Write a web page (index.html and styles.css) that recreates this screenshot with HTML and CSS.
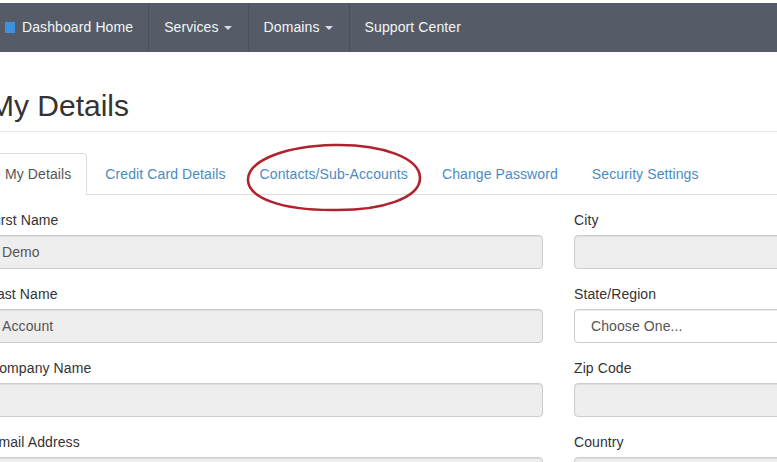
FILE: index.html
```html
<!DOCTYPE html>
<html lang="en">
<head>
<meta charset="utf-8">
<title>My Details</title>
<link rel="stylesheet" href="styles.css">
</head>
<body>
<nav class="navbar">
  <a class="nav-item nav-home" href="#"><span class="home-icon"></span>Dashboard Home</a>
  <a class="nav-item" href="#">Services<span class="caret"></span></a>
  <a class="nav-item" href="#">Domains<span class="caret"></span></a>
  <a class="nav-item nav-last" href="#">Support Center</a>
</nav>
<main class="page">
  <h1 class="page-title">My Details</h1>
  <div class="tabs-wrap">
    <ul class="tabs">
      <li class="tab active"><a href="#">My Details</a></li>
      <li class="tab"><a href="#">Credit Card Details</a></li>
      <li class="tab"><a href="#">Contacts/Sub-Accounts</a></li>
      <li class="tab"><a href="#">Change Password</a></li>
      <li class="tab"><a href="#">Security Settings</a></li>
    </ul>
    <svg class="circle-mark" width="184" height="72" viewBox="0 0 184 72">
      <path d="M92 3 C140 2 178 16 178 36 C178 56 140 69 90 68 C40 68 5 56 6 37 C7 18 44 4 92 3 Z" fill="none" stroke="#b1222e" stroke-width="2.6"/>
    </svg>
  </div>
  <form class="form-grid">
    <div class="col">
      <div class="form-group"><label class="lbl">First Name</label><input class="field" type="text" value="Demo" readonly></div>
      <div class="form-group"><label class="lbl">Last Name</label><input class="field" type="text" value="Account" readonly></div>
      <div class="form-group"><label class="lbl">Company Name</label><input class="field" type="text" value="" readonly></div>
      <div class="form-group"><label class="lbl">Email Address</label><input class="field" type="text" value="" readonly></div>
    </div>
    <div class="col">
      <div class="form-group"><label class="lbl">City</label><input class="field" type="text" value="" readonly></div>
      <div class="form-group"><label class="lbl">State/Region</label><div class="field select">Choose One...</div></div>
      <div class="form-group"><label class="lbl">Zip Code</label><input class="field" type="text" value="" readonly></div>
      <div class="form-group"><label class="lbl">Country</label><input class="field" type="text" value="" readonly></div>
    </div>
  </form>
</main>
</body>
</html>
```
FILE: styles.css
```css
html, body {
  margin: 0;
  padding: 0;
  overflow: hidden;
  background: #ffffff;
}
body {
  padding-top: 3px;
  font-family: "Liberation Sans", Arial, sans-serif;
  font-size: 14px;
  letter-spacing: 0.1px;
  color: #333333;
}
.navbar {
  display: flex;
  height: 49px;
  background: #555c67;
  align-items: stretch;
}
.nav-item {
  display: flex;
  align-items: center;
  padding: 0 16px 0 15px;
  color: #f4f5f6;
  text-decoration: none;
  font-size: 14px;
  border-right: 1px solid #4a5059;
  padding-bottom: 1px;
}
.nav-home {
  padding-left: 5px;
  padding-right: 15px;
}
.nav-last {
  border-right: none;
}
.home-icon {
  width: 10px;
  height: 11px;
  background: #3d92e0;
  margin-right: 7px;
}
.caret {
  display: inline-block;
  width: 0;
  height: 0;
  margin-left: 5px;
  margin-top: 2px;
  border-top: 4px solid #d9dce0;
  border-left: 4px solid transparent;
  border-right: 4px solid transparent;
}
.page {
  margin-left: -11px;
  width: 1139px;
}
.page-title {
  margin: 37px 0 0 0;
  padding-bottom: 9px;
  font-size: 30px;
  line-height: 33px;
  letter-spacing: 0;
  font-weight: normal;
  color: #333333;
  border-bottom: 1px solid #e6e6e6;
}
.tabs-wrap {
  position: relative;
  margin-top: 21px;
}
.tabs {
  display: flex;
  list-style: none;
  margin: 0;
  padding: 0;
  border-bottom: 1px solid #dddddd;
}
.tab {
  margin-bottom: -1px;
  margin-right: 2px;
}
.tab a {
  display: block;
  padding: 10px 15px;
  line-height: 20px;
  border: 1px solid transparent;
  border-radius: 4px 4px 0 0;
  color: #4b8bc2;
  text-decoration: none;
}
.tab.active a {
  color: #555555;
  background: #ffffff;
  border-color: #dddddd;
  border-bottom-color: transparent;
}
.circle-mark {
  position: absolute;
  left: 253px;
  top: -11px;
}
.form-grid {
  display: grid;
  grid-template-columns: 554px 554px;
  column-gap: 31px;
  padding-top: 15px;
}
.form-group {
  margin-bottom: 15px;
}
.lbl {
  display: block;
  line-height: 20px;
  margin-bottom: 5px;
  color: #333333;
}
.field {
  display: block;
  box-sizing: border-box;
  width: 100%;
  height: 34px;
  margin: 0;
  padding: 6px 12px;
  font-family: "Liberation Sans", Arial, sans-serif;
  font-size: 14px;
  letter-spacing: 0.1px;
  line-height: 20px;
  color: #555555;
  background: #eeeeee;
  border: 1px solid #cccccc;
  border-radius: 4px;
  box-shadow: inset 0 1px 1px rgba(0,0,0,0.075);
  outline: none;
}
.select {
  background: #ffffff;
  padding-left: 16px;
}
```
